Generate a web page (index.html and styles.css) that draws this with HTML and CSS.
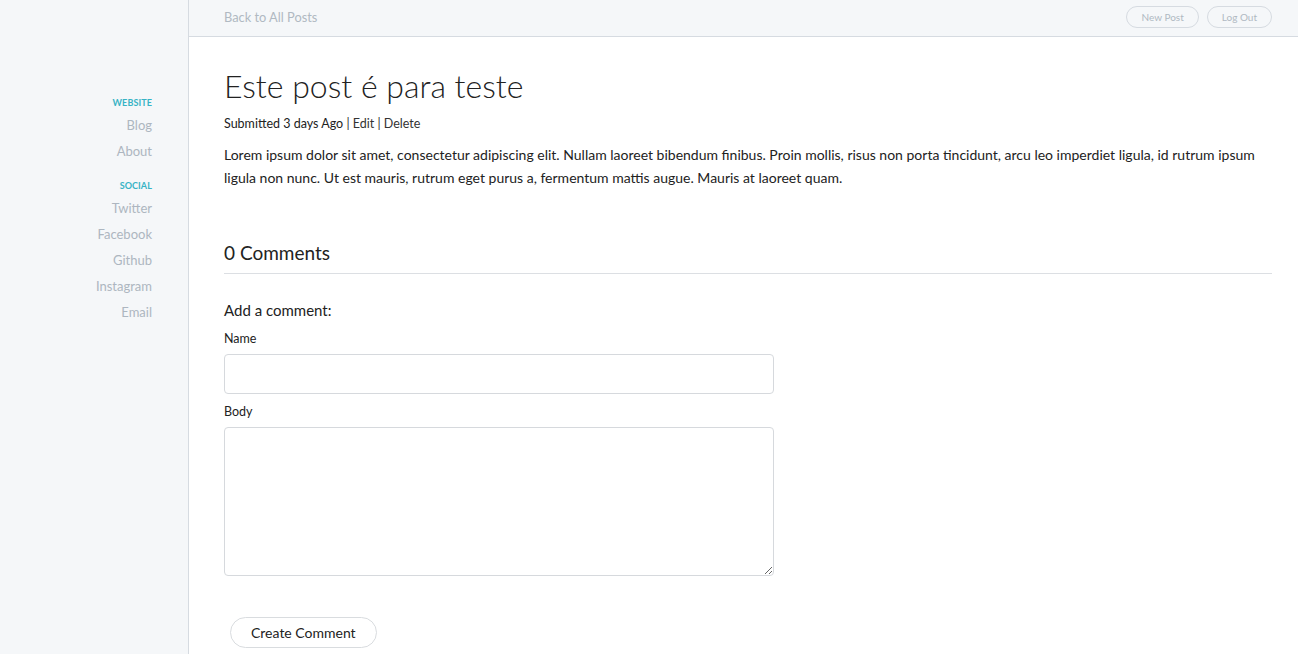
FILE: index.html
```html
<!DOCTYPE html>
<html>
<head>
<meta charset="utf-8">
<link rel="stylesheet" href="styles.css">
</head>
<body>
<div class="app">
  <aside class="sidebar">
    <nav class="side-nav">
      <div class="side-head">Website</div>
      <a class="side-link" href="#">Blog</a>
      <a class="side-link" href="#">About</a>
      <div class="side-head side-head-2">Social</div>
      <a class="side-link" href="#">Twitter</a>
      <a class="side-link" href="#">Facebook</a>
      <a class="side-link" href="#">Github</a>
      <a class="side-link" href="#">Instagram</a>
      <a class="side-link" href="#">Email</a>
    </nav>
  </aside>
  <div class="main">
    <header class="topbar">
      <a class="back" href="#">Back to All Posts</a>
      <div class="top-actions">
        <a class="pill-sm" href="#">New Post</a>
        <a class="pill-sm" href="#">Log Out</a>
      </div>
    </header>
    <main class="content">
      <h1 class="title">Este post é para teste</h1>
      <div class="meta">Submitted 3 days Ago <span class="sep">|</span> <a href="#">Edit</a> <span class="sep">|</span> <a href="#">Delete</a></div>
      <p class="body-text">Lorem ipsum dolor sit amet, consectetur adipiscing elit. Nullam laoreet bibendum finibus. Proin mollis, risus non porta tincidunt, arcu leo imperdiet ligula, id rutrum ipsum ligula non nunc. Ut est mauris, rutrum eget purus a, fermentum mattis augue. Mauris at laoreet quam.</p>
      <h2 class="comments-head">0 Comments</h2>
      <h3 class="add-head">Add a comment:</h3>
      <form class="form">
        <label class="lbl">Name</label>
        <input class="field" type="text">
        <label class="lbl lbl-2">Body</label>
        <textarea class="field area"></textarea>
        <button class="btn" type="button">Create Comment</button>
      </form>
    </main>
  </div>
</div>
</body>
</html>
```
FILE: styles.css
```css
* { box-sizing: border-box; }
html, body { margin: 0; height: 100%; }
body { font-family: Lato, "Open Sans", sans-serif; color: #222; background: #fff; }
a { text-decoration: none; color: inherit; }
.app { display: flex; min-height: 654px; }
.sidebar { width: 189px; flex: none; background: #f5f7f9; border-right: 1px solid #d6dbe1; padding: 97px 36px 0 0; }
.side-nav { display: flex; flex-direction: column; align-items: flex-end; }
.side-head { font-size: 9px; font-weight: 700; text-transform: uppercase; color: #37b3c5; line-height: 12px; letter-spacing: 0.1px; }
.side-head-2 { margin-top: 16px; }
.side-link { font-size: 13px; color: #adb6c0; line-height: 26px; }
.side-head + .side-link { margin-top: 3px; }
.main { flex: 1; display: flex; flex-direction: column; }
.topbar { height: 37px; background: #f5f7f9; border-bottom: 1px solid #d6dbe1; display: flex; align-items: center; justify-content: space-between; padding: 0 26px 0 35px; }
.back { font-size: 12.8px; color: #b0b9c2; margin-top: -2px; }
.top-actions { display: flex; gap: 8px; margin-top: -2px; }
.pill-sm { font-size: 10px; color: #b0b9c2; border: 1px solid #d6dbe1; border-radius: 11px; height: 22px; display: flex; align-items: center; padding: 0 14px; }
.content { padding: 29px 26px 0 35px; }
.title { font-size: 32px; font-weight: 300; margin: 0; line-height: 40px; color: #222; }
.meta { font-size: 12.5px; margin-top: 10px; line-height: 16px; }
.meta a, .sep { color: #333; }
.body-text { font-size: 14px; line-height: 23px; margin: 11px 0 0; }
.comments-head { font-size: 19px; font-weight: 400; margin: 52px 0 0; padding-bottom: 8px; border-bottom: 1px solid #dcdfe3; line-height: 24px; }
.add-head { font-size: 15px; font-weight: 400; margin: 26px 0 0; line-height: 20px; }
.form { display: flex; flex-direction: column; align-items: flex-start; }
.lbl { font-size: 12.5px; margin-top: 11px; line-height: 16px; }
.lbl-2 { margin-top: 10px; }
.field { width: 550px; height: 40px; border: 1px solid #d6d9dd; border-radius: 4px; margin-top: 7px; font: inherit; }
.area { height: 149px; resize: vertical; }
.btn { margin: 41px 0 0 6px; height: 31px; padding: 0 20px; border: 1px solid #d9dcdf; border-radius: 16px; background: #fff; font-family: inherit; font-size: 14px; color: #222; }
```
